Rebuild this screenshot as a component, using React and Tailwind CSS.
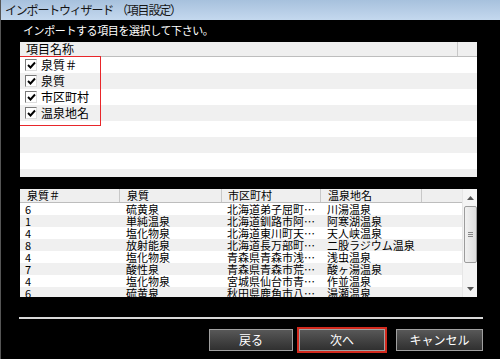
import React from "react";

const rows = [
  ["6", "硫黄泉", "北海道弟子屈町…", "川湯温泉"],
  ["1", "単純温泉", "北海道釧路市阿…", "阿寒湖温泉"],
  ["4", "塩化物泉", "北海道東川町天…", "天人峡温泉"],
  ["8", "放射能泉", "北海道長万部町…", "二股ラジウム温泉"],
  ["4", "塩化物泉", "青森県青森市浅…", "浅虫温泉"],
  ["7", "酸性泉", "青森県青森市荒…", "酸ヶ湯温泉"],
  ["4", "塩化物泉", "宮城県仙台市青…", "作並温泉"],
  ["6", "硫黄泉", "秋田県鹿角市八…", "湯瀬温泉"],
];

const items = ["泉質＃", "泉質", "市区町村", "温泉地名"];

function Check() {
  return (
    <div className="w-[12px] h-[12px] bg-white border border-[#7a7a7a] border-r-[#dcdcdc] border-b-[#dcdcdc] flex items-center justify-center">
      <svg width="9" height="8" viewBox="0 0 9 8">
        <path d="M1 4 L3.5 6.5 L8 1.5" fill="none" stroke="#000" strokeWidth="1.9" />
      </svg>
    </div>
  );
}

function Btn({ label, w }) {
  return (
    <div className={`${w} h-[22px] border border-[#a0a0a0] bg-gradient-to-b from-[#585858] to-[#303030] flex items-center justify-center text-white text-[12px] leading-none`}>
      {label}
    </div>
  );
}

export default function App() {
  return (
    <div
      className="w-[500px] h-[359px] bg-black flex flex-col overflow-hidden border-l border-[#555]"
      style={{ fontFamily: '"Noto Sans CJK JP", "Noto Sans", sans-serif' }}
    >
      <div className="h-[20px] shrink-0 bg-gradient-to-b from-[#a7c1dd] to-[#c4d8ee] text-[#151515] text-[12px] tracking-[-1.2px] leading-[20px] pl-[4px] whitespace-nowrap flex">
        <span>インポートウィザード</span>
        <span className="ml-[3px]">（項目設定）</span>
      </div>
      <div className="flex flex-col pl-[19px]">
        <div className="h-[22px] pl-[3px] pt-[3px] text-white text-[11px] tracking-[-0.4px] leading-[15px]">
          インポートする項目を選択して下さい。
        </div>
        <div className="w-[457px] h-[135px] bg-white flex flex-col overflow-hidden">
          <div className="h-[15px] shrink-0 flex bg-[#efefef] border-b border-[#bdbdbd] text-[12px] leading-[14px] text-black">
            <div className="w-[438px] border-r border-[#c8c8c8] pl-[6px]">項目名称</div>
            <div className="flex-1" />
          </div>
          <div className="relative flex flex-col">
            {[0, 1, 2, 3, 4, 5, 6, 7].map((i) => (
              <div
                key={i}
                className={`h-[16px] shrink-0 flex items-center pl-[5px] gap-[4px] text-[12px] text-black ${i % 2 === 1 ? "bg-[#f0f0f0]" : "bg-white"}`}
              >
                {i < 4 && (
                  <>
                    <Check />
                    <span className="leading-none">{items[i]}</span>
                  </>
                )}
              </div>
            ))}
            <div className="absolute left-[-3px] top-[-1px] w-[84px] h-[70px] border border-[#e8262a]" />
          </div>
        </div>
        <div className="mt-[12px] w-[457px] h-[108px] bg-white flex overflow-hidden">
          <div className="flex-1 flex flex-col text-black">
            <div className="h-[14px] shrink-0 flex bg-[#efefef] border-b border-[#bdbdbd] text-[11px] leading-[13px]">
              <div className="w-[100px] border-r border-[#c8c8c8] pl-[7px]">泉質＃</div>
              <div className="w-[102px] border-r border-[#c8c8c8] pl-[7px]">泉質</div>
              <div className="w-[99px] border-r border-[#c8c8c8] pl-[6px]">市区町村</div>
              <div className="w-[101px] border-r border-[#c8c8c8] pl-[7px]">温泉地名</div>
              <div className="flex-1" />
            </div>
            {rows.map((r, i) => (
              <div
                key={i}
                className={`h-[12px] shrink-0 flex text-[11px] leading-[12px] ${i % 2 === 1 ? "bg-[#f0f0f0]" : "bg-white"}`}
              >
                <div className="w-[100px] pl-[5px]">{r[0]}</div>
                <div className="w-[102px] pl-[6px]">{r[1]}</div>
                <div className="w-[99px] pl-[5px] whitespace-nowrap overflow-hidden">{r[2]}</div>
                <div className="w-[101px] pl-[6px] whitespace-nowrap">{r[3]}</div>
              </div>
            ))}
          </div>
          <div className="w-[15px] shrink-0 bg-[#f4f4f4] flex flex-col items-center border-l border-[#e6e6e6]">
            <div className="h-[17px] flex items-center justify-center">
              <svg width="7" height="4" viewBox="0 0 7 4"><path d="M0 4 L3.5 0 L7 4 Z" fill="#555" /></svg>
            </div>
            <div className="w-[13px] h-[57px] bg-gradient-to-r from-[#f1f1f1] to-[#dedede] border border-[#9c9c9c] rounded-[2px] flex flex-col items-center justify-center gap-[1px]">
              <div className="w-[5px] h-px bg-[#888]" />
              <div className="w-[5px] h-px bg-[#888]" />
              <div className="w-[5px] h-px bg-[#888]" />
            </div>
            <div className="flex-1" />
            <div className="h-[17px] flex items-center justify-center">
              <svg width="7" height="4" viewBox="0 0 7 4"><path d="M0 0 L3.5 4 L7 0 Z" fill="#555" /></svg>
            </div>
          </div>
        </div>
        <div className="mt-[20px] ml-[-1px] w-[464px] h-[2px] bg-[#d8d8d8]" />
        <div className="mt-[8px] w-[463px] flex justify-end items-center">
          <Btn label="戻る" w="w-[84px]" />
          <div className="ml-[4px] border-2 border-[#d42a1e]">
            <Btn label="次へ" w="w-[86px]" />
          </div>
          <div className="ml-[9px]">
            <Btn label="キャンセル" w="w-[87px]" />
          </div>
        </div>
      </div>
    </div>
  );
}
